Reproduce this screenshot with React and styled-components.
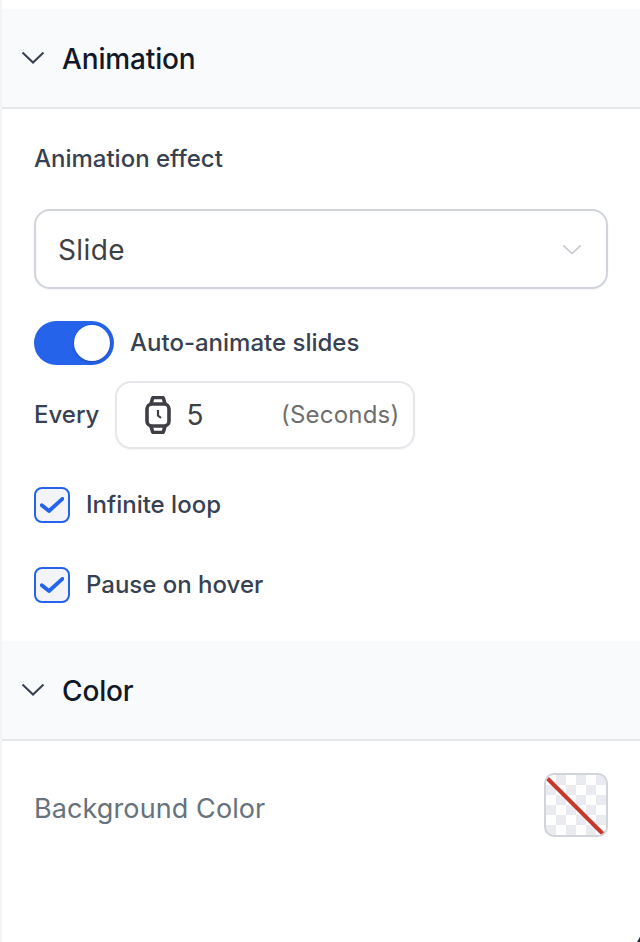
import React from "react"
import styled, { createGlobalStyle } from "styled-components"

const GlobalStyle = createGlobalStyle`
  html, body {
    margin: 0;
    padding: 0;
    background: #ffffff;
  }
  * {
    box-sizing: border-box;
  }
`

const Chevron = ({ size = 24, color = "#374151", width = 2 }) => (
  <svg width={size} height={size * 0.55} viewBox="0 0 24 13" fill="none">
    <path d="M1.5 1.5 L12 11.5 L22.5 1.5" stroke={color} strokeWidth={width} />
  </svg>
)

const WatchIcon = () => (
  <svg width="26" height="38" viewBox="0 0 26 38" fill="none" stroke="#3f3f46" strokeWidth="3.6">
    <rect x="2" y="8" width="22" height="22" rx="5" />
    <path d="M6 8 L7.5 2.5 Q7.8 1.5 9 1.5 H17 Q18.2 1.5 18.5 2.5 L20 8" />
    <path d="M6 30 L7.5 35.5 Q7.8 36.5 9 36.5 H17 Q18.2 36.5 18.5 35.5 L20 30" />
    <path d="M13 14 V19.5 L16 22" strokeWidth="2.2" />
  </svg>
)

const CheckIcon = () => (
  <svg width="24" height="16" viewBox="0 0 24 16" fill="none">
    <path d="M1.8 8.2 L9 14 L22.4 1.8" stroke="#2563eb" strokeWidth="3.8" strokeLinecap="round" strokeLinejoin="round" />
  </svg>
)

const SectionHeader = ({ title }) => (
  <Header>
    <Chevron />
    <HeaderTitle>{title}</HeaderTitle>
  </Header>
)

const CheckRow = ({ label }) => (
  <CheckLine>
    <CheckBox>
      <CheckIcon />
    </CheckBox>
    <RowText>{label}</RowText>
  </CheckLine>
)

export default function App() {
  return (
    <>
      <GlobalStyle />
      <Page>
        <SectionHeader title="Animation" />
        <AnimationBody>
          <FieldLabel>Animation effect</FieldLabel>
          <Select>
            <SelectValue>Slide</SelectValue>
            <Chevron size={20} color="#c9ccd2" />
          </Select>
          <ToggleRow>
            <Toggle>
              <Knob />
            </Toggle>
            <RowText>Auto-animate slides</RowText>
          </ToggleRow>
          <EveryRow>
            <RowText>Every</RowText>
            <SecondsInput>
              <WatchIcon />
              <SecondsValue>5</SecondsValue>
              <SecondsUnit>(Seconds)</SecondsUnit>
            </SecondsInput>
          </EveryRow>
          <CheckList>
            <CheckRow label="Infinite loop" />
            <CheckRow label="Pause on hover" />
          </CheckList>
        </AnimationBody>
        <SectionHeader title="Color" />
        <ColorBody>
          <ColorLabel>Background Color</ColorLabel>
          <Swatch>
            <svg width="60" height="60" viewBox="0 0 60 60">
              <line x1="1.5" y1="3.5" x2="57" y2="59" stroke="#c9392b" strokeWidth="4" />
            </svg>
          </Swatch>
        </ColorBody>
        <CornerMark />
      </Page>
    </>
  )
}

const Page = styled.div`
  position: relative;
  width: 640px;
  height: 942px;
  padding-top: 9px;
  border-left: 2px solid #f3f4f6;
  background: #ffffff;
  font-family: Inter, "Liberation Sans", sans-serif;
  overflow: hidden;
`

const Header = styled.div`
  display: flex;
  align-items: center;
  gap: 17px;
  height: 100px;
  padding-left: 19px;
  background: #f9fafb;
  border-bottom: 2px solid #e5e7eb;
`

const HeaderTitle = styled.div`
  padding-top: 1px;
  font-size: 28px;
  font-weight: 500;
  letter-spacing: -0.15px;
  color: #111827;
`

const AnimationBody = styled.div`
  height: 532px;
  padding: 35px 32px 0 32px;
`

const FieldLabel = styled.div`
  font-size: 24px;
  line-height: 30px;
  font-weight: 500;
  color: #374151;
`

const Select = styled.div`
  display: flex;
  align-items: center;
  justify-content: space-between;
  height: 80px;
  margin-top: 35px;
  padding: 0 24px 0 22px;
  border: 2px solid #d1d5db;
  border-radius: 16px;
  box-shadow: 0 1px 2px rgba(0, 0, 0, 0.05);
`

const SelectValue = styled.span`
  padding-top: 1px;
  font-size: 28px;
  letter-spacing: 0.4px;
  color: #3f3f46;
`

const ToggleRow = styled.div`
  display: flex;
  align-items: center;
  gap: 16px;
  margin-top: 32px;
`

const Toggle = styled.div`
  display: flex;
  align-items: center;
  justify-content: flex-end;
  width: 80px;
  height: 44px;
  padding-right: 4px;
  border-radius: 22px;
  background: #2563eb;
`

const Knob = styled.div`
  width: 36px;
  height: 36px;
  border-radius: 50%;
  background: #ffffff;
  box-shadow: 0 1px 3px rgba(0, 0, 0, 0.25);
`

const RowText = styled.span`
  padding-bottom: 2px;
  font-size: 24px;
  font-weight: 500;
  color: #374151;
`

const EveryRow = styled.div`
  display: flex;
  align-items: center;
  gap: 16px;
  margin-top: 16px;
`

const SecondsInput = styled.div`
  display: flex;
  align-items: center;
  width: 300px;
  height: 68px;
  padding: 0 14px 0 28px;
  border: 2px solid #e5e7eb;
  border-radius: 16px;
  box-shadow: 0 1px 2px rgba(0, 0, 0, 0.05);
`

const SecondsValue = styled.span`
  margin-left: 15px;
  font-size: 28px;
  color: #3f3f46;
`

const SecondsUnit = styled.span`
  margin-left: auto;
  padding-bottom: 2px;
  font-size: 24px;
  letter-spacing: 0.2px;
  color: #6e6e6e;
`

const CheckList = styled.div`
  display: flex;
  flex-direction: column;
  gap: 44px;
  margin-top: 38px;
`

const CheckLine = styled.div`
  display: flex;
  align-items: center;
  gap: 16px;
`

const CheckBox = styled.div`
  display: flex;
  align-items: center;
  justify-content: center;
  width: 36px;
  height: 36px;
  border: 2px solid #2563eb;
  border-radius: 8px;
  background: #f3f4f8;
`

const ColorBody = styled.div`
  display: flex;
  align-items: center;
  justify-content: space-between;
  padding: 32px 32px 0 32px;
`

const ColorLabel = styled.span`
  padding-top: 6px;
  font-size: 27px;
  letter-spacing: 0.1px;
  color: #66727c;
`

const Swatch = styled.div`
  display: flex;
  width: 64px;
  height: 64px;
  border: 2px solid #d1d5db;
  border-radius: 10px;
  overflow: hidden;
  background-color: #ffffff;
  background-image: conic-gradient(#e9ebf0 25%, #ffffff 0 50%, #e9ebf0 0 75%, #ffffff 0);
  background-size: 20px 20px;
`

const CornerMark = styled.div`
  position: absolute;
  right: 0;
  bottom: 0;
  width: 3px;
  height: 5px;
  background: #1f2937;
  clip-path: polygon(100% 0, 100% 100%, 0 100%);
`
